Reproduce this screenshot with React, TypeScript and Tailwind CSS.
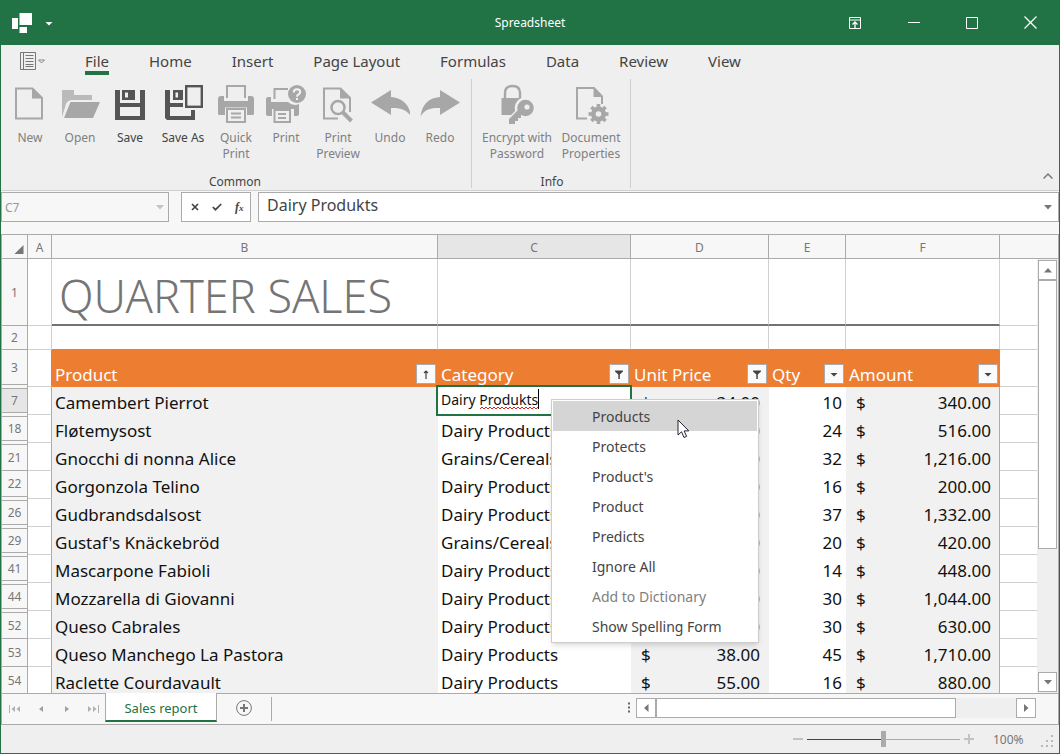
import React from "react";

type IconProps = { children: React.ReactNode; w?: number; h?: number; className?: string };

function Svg({ children, w = 40, h = 40, className = "" }: IconProps) {
  return (
    <svg width={w} height={h} viewBox={`0 0 ${w} ${h}`} className={className} fill="none" aria-hidden="true">
      {children}
    </svg>
  );
}

const GRAY = "#a7a7a7";
const DARK = "#555555";

const NewIcon = () => (
  <Svg>
    <path d="M6 4.500H22.500L32 14V34.500H6Z" stroke={GRAY} strokeWidth="2" />
    <path d="M22 4V14.500H33Z" fill={GRAY} />
  </Svg>
);

const OpenIcon = () => (
  <Svg>
    <path d="M2 6H14V11H32V16H11Q7 17 6 20L2 33Z" fill="#bababa" />
    <path d="M10.500 18H40L33 34H4Z" fill={GRAY} />
  </Svg>
);

const SaveIcon = () => (
  <Svg>
    <path fill={DARK} d="M5 6H10V19H30V6H35V36H5ZM10 23V32H30V23Z" fillRule="evenodd" />
    <path fillRule="evenodd" fill={DARK} d="M12 6H25V16H12ZM15 8.500H18V13.500H15Z" />
  </Svg>
);

const SaveAsIcon = () => (
  <Svg w={44}>
    <path fill={DARK} d="M4 6H9V19H22V23H9V32H30V26H34V36H6L4 34Z" />
    <path fillRule="evenodd" fill={DARK} d="M12 6H22V16H12ZM14.500 8.500H17V13.500H14.500Z" />
    <rect x="25.200" y="2.200" width="15.600" height="20.600" stroke={DARK} strokeWidth="2.400" />
  </Svg>
);

const QuickPrintIcon = () => (
  <Svg>
    <path d="M11 14V2H29V14" stroke={GRAY} strokeWidth="2" />
    <path fill={GRAY} d="M5 12H8V17H32V12H35Q38 12 38 15V29Q38 31 35 31H5Q2 31 2 29V15Q2 12 5 12Z" />
    <path d="M7.500 23.500H32.500V32H7.500Z" fill="#efefef" />
    <path fill={GRAY} d="M2 23H9V31H5Q2 31 2 29ZM31 23H38V29Q38 31 35 31H31Z" />
    <rect x="11" y="25" width="18" height="13" fill="#efefef" stroke={GRAY} strokeWidth="2" />
    <path d="M15 29.500H25M15 33.500H25" stroke={GRAY} strokeWidth="2" />
  </Svg>
);

const PrintIcon = () => (
  <Svg>
    <path d="M8.500 15V5H22" stroke={GRAY} strokeWidth="2" />
    <path fill={GRAY} d="M2 13H5V18H22Q25 21 30 21L33 20V30Q33 32 31 32H28V25H6V32H3Q0 32 0 30V15Q0 13 2 13Z" />
    <rect x="8.500" y="26" width="15.500" height="12" fill="#efefef" stroke={GRAY} strokeWidth="2" />
    <path d="M12 30H20M12 34H20" stroke={GRAY} strokeWidth="2" />
    <circle cx="31" cy="10" r="9" fill={GRAY} />
    <path
      d="M27.800 8.500Q27.800 5.300 31 5.300Q34.200 5.300 34.200 8Q34.200 9.500 32.500 10.500Q31 11.300 31 12.800M31 14V16"
      stroke="#f2f2f2"
      strokeWidth="2"
    />
  </Svg>
);

const PreviewIcon = () => (
  <Svg>
    <path d="M20 34.500H6V4.500H22.500L32 14V28" stroke={GRAY} strokeWidth="2" />
    <path d="M22 4V14.500H33Z" fill={GRAY} />
    <circle cx="20" cy="23.500" r="6.500" fill="#efefef" stroke={GRAY} strokeWidth="2.500" />
    <path d="M24.500 28L33.500 37" stroke={GRAY} strokeWidth="4" />
  </Svg>
);

const UndoIcon = () => (
  <Svg>
    <path fill={GRAY} d="M1 18.500L21 6V13C33 14 39.500 21 41 32.500C37 26 31 23.500 21 24V31Z" />
  </Svg>
);

const RedoIcon = () => (
  <Svg>
    <path fill={GRAY} d="M40 18.500L20 6V13C8 14 2 21 0.500 32.500C4 26 10 23.500 20 24V31Z" />
  </Svg>
);

const EncryptIcon = () => (
  <Svg>
    <path d="M8 15V9Q8 2 15.500 2Q23 2 23 9V15" stroke={GRAY} strokeWidth="2.400" />
    <rect x="4.500" y="14" width="23" height="17" fill={GRAY} />
    <g stroke="#efefef" strokeWidth="2.500">
      <path fill={GRAY} d="M21 26L12 35V40H18V37H21V34H24V31L30 29Z" />
      <circle cx="28.500" cy="24" r="9.500" fill={GRAY} />
    </g>
    <path fill={GRAY} d="M21 26L12 35V40H18V37H21V34H24V31L30 29Z" />
    <circle cx="30" cy="23" r="2.600" fill="#efefef" />
  </Svg>
);

const PropertiesIcon = () => (
  <Svg>
    <path d="M16 34.500H6V4H23L31 12.500V20" stroke={GRAY} strokeWidth="2" />
    <path d="M22.500 3V13H32Z" fill={GRAY} />
    <g transform="translate(27.500 30)">
      <circle r="7.500" fill={GRAY} />
      {[0, 45, 90, 135].map((a) => (
        <rect key={a} x="-1.800" y="-10" width="3.600" height="20" fill={GRAY} transform={`rotate(${a})`} />
      ))}
      <circle r="2.800" fill="#efefef" />
    </g>
  </Svg>
);

const Triangle = ({ dir, color = "#777777" }: { dir: "up" | "down" | "left" | "right"; color?: string }) => {
  const d = {
    up: "M1 7.500L5 3L9 7.500Z",
    down: "M1 3L5 7.500L9 3Z",
    left: "M7.500 1L3 5L7.500 9Z",
    right: "M3 1L7.500 5L3 9Z",
  }[dir];
  return (
    <Svg w={10} h={10}>
      <path d={d} fill={color} />
    </Svg>
  );
};

type RibbonItem = { label: string[]; icon: React.ReactNode; width: string; active?: boolean };

const commonItems: RibbonItem[] = [
  { label: ["New"], icon: <NewIcon />, width: "w-[50px]" },
  { label: ["Open"], icon: <OpenIcon />, width: "w-[50px]" },
  { label: ["Save"], icon: <SaveIcon />, width: "w-[50px]", active: true },
  { label: ["Save As"], icon: <SaveAsIcon />, width: "w-[56px]", active: true },
  { label: ["Quick", "Print"], icon: <QuickPrintIcon />, width: "w-[50px]" },
  { label: ["Print"], icon: <PrintIcon />, width: "w-[50px]" },
  { label: ["Print", "Preview"], icon: <PreviewIcon />, width: "w-[54px]" },
  { label: ["Undo"], icon: <UndoIcon />, width: "w-[50px]" },
  { label: ["Redo"], icon: <RedoIcon />, width: "w-[50px]" },
];

const infoItems: RibbonItem[] = [
  { label: ["Encrypt with", "Password"], icon: <EncryptIcon />, width: "w-[78px]" },
  { label: ["Document", "Properties"], icon: <PropertiesIcon />, width: "w-[70px]" },
];

function RibbonGroup({ title, items, padding }: { title: string; items: RibbonItem[]; padding: string }) {
  return (
    <section className={`flex flex-col border-r border-[#cfcfcf] ${padding}`} aria-label={title}>
      <div className="flex flex-1 items-start">
        {items.map((it) => (
          <button
            key={it.label.join(" ")}
            type="button"
            className={`flex flex-col items-center whitespace-nowrap text-[12px] leading-4 ${it.width} ${
              it.active ? "text-[#444444]" : "text-[#808080]"
            }`}
          >
            <span className="flex h-[46px] items-center pt-1">{it.icon}</span>
            <span className="mt-[5px]">
              {it.label.map((l) => (
                <span key={l} className="block">
                  {l}
                </span>
              ))}
            </span>
          </button>
        ))}
      </div>
      <h2 className="-mb-[2px] text-center text-[12px] leading-4 text-[#444444]">{title}</h2>
    </section>
  );
}

type Row = { n: number; product: string; category: string; price: string; qty: string; amount: string; gap: boolean };

const rows: Row[] = [
  { n: 7, product: "Camembert Pierrot", category: "", price: "34.00", qty: "10", amount: "340.00", gap: true },
  { n: 18, product: "Fløtemysost", category: "Dairy Products", price: "21.50", qty: "24", amount: "516.00", gap: true },
  { n: 21, product: "Gnocchi di nonna Alice", category: "Grains/Cereals", price: "38.00", qty: "32", amount: "1,216.00", gap: false },
  { n: 22, product: "Gorgonzola Telino", category: "Dairy Products", price: "12.50", qty: "16", amount: "200.00", gap: true },
  { n: 26, product: "Gudbrandsdalsost", category: "Dairy Products", price: "36.00", qty: "37", amount: "1,332.00", gap: true },
  { n: 29, product: "Gustaf's Knäckebröd", category: "Grains/Cereals", price: "21.00", qty: "20", amount: "420.00", gap: true },
  { n: 41, product: "Mascarpone Fabioli", category: "Dairy Products", price: "32.00", qty: "14", amount: "448.00", gap: true },
  { n: 44, product: "Mozzarella di Giovanni", category: "Dairy Products", price: "34.80", qty: "30", amount: "1,044.00", gap: true },
  { n: 52, product: "Queso Cabrales", category: "Dairy Products", price: "21.00", qty: "30", amount: "630.00", gap: false },
  { n: 53, product: "Queso Manchego La Pastora", category: "Dairy Products", price: "38.00", qty: "45", amount: "1,710.00", gap: false },
  { n: 54, product: "Raclette Courdavault", category: "Dairy Products", price: "55.00", qty: "16", amount: "880.00", gap: false },
];

function RowHeader({ n, before, after, height, selected }: { n: number; before?: boolean; after?: boolean; height: string; selected?: boolean }) {
  return (
    <th scope="row" className="border-r border-[#ababab] bg-[#f7f7f7] p-0 text-[12px] font-normal text-[#777777]">
      <div className={`flex flex-col ${height}`}>
        {before && <div className="h-[2px] border-b border-[#ababab]" />}
        <div className={`flex flex-1 items-center justify-center border-b border-[#ababab] pt-px ${selected ? "bg-[#e6e6e6]" : ""}`}>{n}</div>
        {after && <div className="h-[2px]" />}
      </div>
    </th>
  );
}

function FilterButton({ kind, label }: { kind: "sort" | "filter" | "menu"; label: string }) {
  return (
    <button type="button" aria-label={label} className="flex size-5 items-center justify-center border border-[#ababab] bg-[#fafafa]">
      <Svg w={12} h={12}>
        {kind === "sort" && <path d="M6 11V3M4 5L6 3L8 5" stroke="#444444" strokeWidth="1.200" />}
        {kind === "filter" && <path d="M2 2.500H10V3.500L6.800 6.500V11H5.300V6.500L2 3.500Z" fill="#444444" />}
        {kind === "menu" && <path d="M2.500 5H9.500L6 8.500Z" fill="#444444" />}
      </Svg>
    </button>
  );
}

const headings: { label: string; kind: "sort" | "filter" | "menu" }[] = [
  { label: "Product", kind: "sort" },
  { label: "Category", kind: "filter" },
  { label: "Unit Price", kind: "filter" },
  { label: "Qty", kind: "menu" },
  { label: "Amount", kind: "menu" },
];

const suggestions = ["Products", "Protects", "Product's", "Product", "Predicts", "Ignore All", "Add to Dictionary", "Show Spelling Form"];

function SpellingMenu() {
  return (
    <ul role="menu" className="absolute top-[12px] left-[113px] z-20 w-[208px] border border-[#cdcdcd] bg-white p-px shadow-md">
      {suggestions.map((s, i) => (
        <li key={s} role="none">
          <button
            type="button"
            role="menuitem"
            disabled={s === "Add to Dictionary"}
            className={`block h-[30px] w-full pt-px pl-[39px] text-left text-[14px] text-[#444444] disabled:text-[#808080] ${i === 0 ? "bg-[#d5d5d5]" : ""}`}
          >
            {s}
          </button>
        </li>
      ))}
      <svg width="14" height="20" viewBox="0 0 14 20" className="absolute top-[19px] left-[125px]" aria-hidden="true">
        <path d="M1 1V16L4.500 12.800L7 18.500L9.600 17.300L7.100 11.900H11.800Z" fill="#ffffff" stroke="#222233" strokeWidth="1" />
      </svg>
    </ul>
  );
}

function CellEditor() {
  return (
    <>
      <div className="absolute -top-[2px] -left-[2px] z-10 h-[31px] w-[196px] border-2 border-[#217346] bg-white">
        <input
          aria-label="Cell C7"
          defaultValue="Dairy Produkts"
          spellCheck={false}
          className="block h-[25px] w-full bg-transparent pl-[3px] text-[14px] text-[#111111] outline-none"
        />
        <svg width="60" height="4" className="absolute top-[19px] left-[42px]" aria-hidden="true">
          <path
            d="M0 3L2 1L4 3L6 1L8 3L10 1L12 3L14 1L16 3L18 1L20 3L22 1L24 3L26 1L28 3L30 1L32 3L34 1L36 3L38 1L40 3L42 1L44 3L46 1L48 3L50 1L52 3L54 1L56 3L58 1"
            fill="none"
            stroke="#e02020"
          />
        </svg>
        <span className="absolute top-[2px] left-[100px] h-5 w-px bg-black" />
      </div>
      <SpellingMenu />
    </>
  );
}

function Sheet() {
  const colHead = "h-[24px] border-r border-b border-[#ababab] p-0 text-[12px] font-normal text-[#777777]";
  return (
    <table className="w-full min-w-[1082px] table-fixed border-separate border-spacing-0 text-[17px] text-[#111111]">
      <colgroup>
        <col className="w-[26px]" />
        <col className="w-[24px]" />
        <col className="w-[386px]" />
        <col className="w-[193px]" />
        <col className="w-[138px]" />
        <col className="w-[77px]" />
        <col className="w-[154px]" />
        <col />
      </colgroup>
      <thead>
        <tr className="bg-[#f7f7f7]">
          <td className={colHead}>
            <Svg w={25} h={23} className="block">
              <path d="M21.500 10V19H12.500Z" fill="#777777" />
            </Svg>
          </td>
          {["A", "B", "C", "D", "E", "F", "G"].map((c) => (
            <th key={c} scope="col" className={`${colHead} pt-[2px] leading-5 ${c === "C" ? "bg-[#e6e6e6]" : ""}`}>
              {c}
            </th>
          ))}
        </tr>
      </thead>
      <tbody>
        <tr>
          <RowHeader n={1} height="h-[67px]" />
          <td className="border-r border-b border-[#d0d0d0]" />
          <td className="border-r border-b-2 border-r-[#d0d0d0] border-b-[#767171] p-0 pt-2 pl-[7px] text-[45px] leading-none font-light text-[#757575]">
            QUARTER SALES
          </td>
          {["c", "d", "e", "f"].map((k) => (
            <td key={k} className="border-r border-b-2 border-r-[#d0d0d0] border-b-[#767171]" />
          ))}
          <td className="border-b border-[#d0d0d0]" />
        </tr>
        <tr>
          <RowHeader n={2} height="h-[24px]" />
          <td className="border-r border-b border-[#d0d0d0] p-0" />
          {["b", "c", "d", "e", "f"].map((k) => (
            <td key={k} className="border-r border-b border-r-[#d0d0d0] border-b-[#ed7d31] p-0" />
          ))}
          <td className="border-b border-[#d0d0d0] p-0" />
        </tr>
        <tr>
          <RowHeader n={3} height="h-[37px]" after />
          <td className="border-r border-b border-r-[#ed7d31] border-b-[#d0d0d0] p-0" />
          {headings.map((h) => (
            <td key={h.label} className="bg-[#ed7d31] p-0 align-bottom text-white">
              <div className="flex h-6 items-center justify-between pr-[2px] pb-[2px] pl-[3px]">
                <span className="pt-px">{h.label}</span>
                <FilterButton kind={h.kind} label={`Filter ${h.label}`} />
              </div>
            </td>
          ))}
          <td className="border-b border-[#d0d0d0] p-0" />
        </tr>
        {rows.map((r, i) => (
          <tr key={r.n}>
            <RowHeader n={r.n} height="h-[28px]" before={i === 0 || rows[i - 1].gap} after={r.gap} selected={r.n === 7} />
            <td className="border-r border-b border-r-[#ababab] border-b-[#d0d0d0] p-0" />
            <td className="bg-[#f1f1f1] p-0 pt-1 pl-[3px] leading-6">{r.product}</td>
            <td className="relative p-0 pt-1 pl-[3px] leading-6">{r.n === 7 ? <CellEditor /> : r.category}</td>
            <td className="bg-[#f1f1f1] p-0 pt-1 leading-6">
              <div className="flex justify-between pr-[9px] pl-[10px]">
                <span>$</span>
                <span>{r.price}</span>
              </div>
            </td>
            <td className="p-0 pt-1 pr-1 text-right leading-6">{r.qty}</td>
            <td className="border-r border-[#ababab] bg-[#f1f1f1] p-0 pt-1 leading-6">
              <div className="flex justify-between pr-2 pl-[10px]">
                <span>$</span>
                <span>{r.amount}</span>
              </div>
            </td>
            <td className="border-b border-[#d0d0d0] p-0" />
          </tr>
        ))}
      </tbody>
    </table>
  );
}

const scrollBtn = "flex shrink-0 items-center justify-center border border-[#ababab] bg-white";

export default function App() {
  return (
    <div className="flex h-screen flex-col overflow-hidden border border-t-0 border-[#217346] bg-[#efefef] font-['Noto_Sans',sans-serif]">
      <header className="grid h-[45px] shrink-0 grid-cols-[1fr_auto_1fr] items-center bg-[#217346] text-white">
        <div className="flex items-center gap-3 pl-[11px]">
          <Svg w={20} h={20}>
            <path d="M0 5H6V16H0ZM7.500 0H20V12H7.500ZM7.500 14H15V20H7.500Z" fill="#ffffff" />
          </Svg>
          <button type="button" aria-label="Customize quick access" className="flex">
            <Svg w={10} h={10}>
              <path d="M1.500 4H8.500L5 7.500Z" fill="#ffffff" />
            </Svg>
          </button>
        </div>
        <h1 className="text-[12px]">Spreadsheet</h1>
        <div className="flex justify-end">
          <button type="button" aria-label="Ribbon display options" className="flex h-[45px] w-[58px] items-center justify-center">
            <Svg w={14} h={14}>
              <path d="M1.500 1.500H12.500V12.500H1.500ZM1 4H13" stroke="#ffffff" />
              <path d="M7 12V7M4.500 8.500L7 6L9.500 8.500" stroke="#ffffff" strokeWidth="1.300" />
            </Svg>
          </button>
          <button type="button" aria-label="Minimize" className="flex h-[45px] w-[59px] items-center justify-center">
            <Svg w={12} h={13}>
              <path d="M0 6.500H12" stroke="#ffffff" />
            </Svg>
          </button>
          <button type="button" aria-label="Maximize" className="flex h-[45px] w-[58px] items-center justify-center">
            <Svg w={12} h={12}>
              <path d="M0.500 0.500H11.500V11.500H0.500Z" stroke="#ffffff" />
            </Svg>
          </button>
          <button type="button" aria-label="Close" className="flex h-[45px] w-[58px] items-center justify-center">
            <Svg w={13} h={13}>
              <path d="M0.500 0.500L12.500 12.500M12.500 0.500L0.500 12.500" stroke="#ffffff" strokeWidth="1.300" />
            </Svg>
          </button>
        </div>
      </header>

      <nav className="flex h-[34px] shrink-0 items-start text-[15px] text-[#444444]">
        <button type="button" aria-label="Application menu" className="mt-[7px] ml-[19px] flex w-[45px]">
          <Svg w={26} h={18}>
            <path d="M0.500 0.500H15.500V17.500H0.500ZM3.500 0V18" stroke="#777777" />
            <path d="M5.500 3.500H13.500M5.500 6.500H13.500M5.500 9.500H13.500M5.500 12.500H13.500M5.500 14.500H13.500" stroke="#777777" />
            <path d="M18.500 8H24.500L21.500 11Z" stroke="#888888" />
          </Svg>
        </button>
        {["File", "Home", "Insert", "Page Layout", "Formulas", "Data", "Review", "View"].map((t) => (
          <button key={t} type="button" className="px-5 pt-[6px]">
            <span className={`block h-6 leading-5 ${t === "File" ? "border-b-4 border-[#217346]" : ""}`}>{t}</span>
          </button>
        ))}
      </nav>

      <div className="flex h-[112px] shrink-0 items-start justify-between border-b border-[#cfcfcf]">
        <div className="flex h-[109px]">
          <RibbonGroup title="Common" items={commonItems} padding="pl-1 pr-[6px]" />
          <RibbonGroup title="Info" items={infoItems} padding="pl-[6px] pr-1" />
        </div>
        <button type="button" aria-label="Collapse ribbon" className="flex self-end pr-[6px] pb-[10px]">
          <Svg w={10} h={8}>
            <path d="M0.500 6.500L5 2L9.500 6.500" stroke="#777777" strokeWidth="1.500" />
          </Svg>
        </button>
      </div>

      <div className="flex h-[43px] shrink-0 items-start bg-[#f7f7f7] pt-px">
        <div className="flex h-[30px] w-[168px] items-center border border-[#ababab] pr-[3px]">
          <input aria-label="Name box" defaultValue="C7" className="w-full min-w-0 bg-transparent pt-px pl-[3px] text-[12px] text-[#999999] outline-none" />
          <button type="button" aria-label="Open name list" className="flex">
            <Triangle dir="down" color="#c4c4c4" />
          </button>
        </div>
        <div className="ml-3 flex h-[30px] w-[70px] items-center justify-around border border-[#ababab] bg-white pl-[3px]">
          <button type="button" aria-label="Cancel" className="flex">
            <Svg w={8} h={8}>
              <path d="M1 1L7 7M7 1L1 7" stroke="#444444" strokeWidth="1.700" />
            </Svg>
          </button>
          <button type="button" aria-label="Enter" className="flex">
            <Svg w={10} h={8}>
              <path d="M0.800 4L3.500 6.700L9.200 1" stroke="#444444" strokeWidth="1.700" />
            </Svg>
          </button>
          <button type="button" aria-label="Insert function" className="font-['Liberation_Serif',serif] text-[12px] leading-none font-bold text-[#444444] italic">
            f<span className="text-[9px]">x</span>
          </button>
        </div>
        <div className="ml-[7px] flex h-[30px] flex-1 items-center border border-[#ababab] bg-white pr-[5px]">
          <input
            aria-label="Formula"
            defaultValue="Dairy Produkts"
            className="h-[28px] w-full min-w-0 bg-transparent pb-1 pl-2 text-[16px] text-[#444444] outline-none"
          />
          <button type="button" aria-label="Expand formula bar" className="flex">
            <Triangle dir="down" />
          </button>
        </div>
      </div>

      <main className="flex min-h-0 flex-1 overflow-hidden border-x border-t border-[#ababab] bg-white">
        <div className="min-w-0 flex-1 overflow-hidden">
          <Sheet />
        </div>
        <div className="flex w-[21px] shrink-0 flex-col">
          <div className="h-[24px] shrink-0 border-b border-[#ababab] bg-[#f7f7f7]" />
          <div className="flex min-h-0 flex-1 flex-col bg-[#efefef] py-px pr-px pl-px">
            <button type="button" aria-label="Scroll up" className={`${scrollBtn} h-5 w-full`}>
              <Triangle dir="up" />
            </button>
            <div className="flex-[268] border border-[#ababab] bg-white" />
            <div className="flex-[124]" />
            <button type="button" aria-label="Scroll down" className={`${scrollBtn} h-5 w-full`}>
              <Triangle dir="down" />
            </button>
          </div>
        </div>
      </main>

      <div className="flex h-[32px] shrink-0 items-start border border-[#ababab] bg-[#f7f7f7]">
        <div className="flex h-[29px] w-[103px] items-center justify-between pr-[6px] pl-[7px]">
          <button type="button" aria-label="First sheet">
            <Svg w={12} h={10}>
              <path d="M0 1H1V9H0ZM6 2V8L2.500 5ZM11 2V8L7.500 5Z" fill="#b0b0b0" />
            </Svg>
          </button>
          <button type="button" aria-label="Previous sheet">
            <Svg w={12} h={10}>
              <path d="M8 2V8L4 5Z" fill="#a0a0a0" />
            </Svg>
          </button>
          <button type="button" aria-label="Next sheet">
            <Svg w={12} h={10}>
              <path d="M4 2V8L8 5Z" fill="#a0a0a0" />
            </Svg>
          </button>
          <button type="button" aria-label="Last sheet">
            <Svg w={12} h={10}>
              <path d="M11 1H12V9H11ZM1 2V8L4.500 5ZM6 2V8L9.500 5Z" fill="#b0b0b0" />
            </Svg>
          </button>
        </div>
        <button
          type="button"
          className="-mt-px h-[29px] w-[112px] border-x border-b-2 border-x-[#ababab] border-b-[#217346] bg-white pt-[4px] text-[13px] text-[#217346]"
        >
          Sales report
        </button>
        <button type="button" aria-label="Add sheet" className="mt-[6px] ml-[19px] flex">
          <Svg w={16} h={16}>
            <circle cx="8" cy="8" r="7.400" stroke="#777777" />
            <path d="M4 8H12M8 4V12" stroke="#777777" strokeWidth="2" />
          </Svg>
        </button>
        <div className="mt-[3px] ml-[19px] h-6 w-px bg-[#ababab]" />
        <div className="mt-1 mr-[22px] ml-auto flex h-5 w-[411px] items-center">
          <Svg w={9} h={12}>
            <path d="M3 1.500H5M3 5.500H5M3 9.500H5" stroke="#666666" strokeWidth="2" />
          </Svg>
          <button type="button" aria-label="Scroll left" className={`${scrollBtn} ml-[2px] h-5 w-5`}>
            <Triangle dir="left" />
          </button>
          <div className="flex h-full flex-1 bg-[#efefef]">
            <div className="w-5/6 border border-[#ababab] bg-white" />
          </div>
          <button type="button" aria-label="Scroll right" className={`${scrollBtn} h-5 w-5`}>
            <Triangle dir="right" />
          </button>
        </div>
      </div>

      <footer className="flex h-[28px] shrink-0 items-center justify-end pr-[6px] text-[12px] text-[#777777]">
        <button type="button" aria-label="Zoom out" className="flex">
          <Svg w={10} h={10}>
            <path d="M0 5H10" stroke="#c2c2c2" strokeWidth="2" />
          </Svg>
        </button>
        <input
          type="range"
          aria-label="Zoom"
          min={0}
          max={100}
          defaultValue={50}
          className="mx-[4px] h-4 w-[153px] appearance-none bg-[linear-gradient(90deg,#444444_50%,#ababab_50%)] bg-[length:100%_1px] bg-center bg-no-repeat [&::-webkit-slider-thumb]:h-4 [&::-webkit-slider-thumb]:w-[5px] [&::-webkit-slider-thumb]:appearance-none [&::-webkit-slider-thumb]:bg-[#ababab]"
        />
        <button type="button" aria-label="Zoom in" className="flex">
          <Svg w={10} h={10}>
            <path d="M0 5H10M5 0V10" stroke="#c2c2c2" strokeWidth="2" />
          </Svg>
        </button>
        <span className="ml-[19px] w-[34px] pt-px">100%</span>
        <Svg w={12} h={12} className="mt-1 ml-[14px]">
          <path d="M10 0H12V2H10ZM10 5H12V7H10ZM10 10H12V12H10ZM5 5H7V7H5ZM5 10H7V12H5ZM0 10H2V12H0Z" fill="#b8b8b8" />
        </Svg>
      </footer>
    </div>
  );
}
